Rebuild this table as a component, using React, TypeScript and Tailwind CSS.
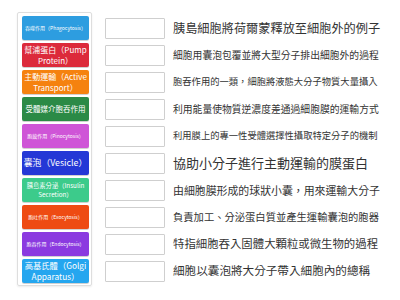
import React from "react";

const TILES = [
  { lines: ["吞噬作用（Phagocytosis）"], bg: "bg-[#2d9de0]", size: "text-[5px]" },
  { lines: ["幫浦蛋白（Pump", "Protein）"], bg: "bg-[#dc2a3b]", size: "text-[8px] leading-[11px]" },
  { lines: ["主動運輸（Active", "Transport）"], bg: "bg-[#f5820f]", size: "text-[8px] leading-[11px]" },
  { lines: ["受體媒介胞吞作用"], bg: "bg-[#2b8a46]", size: "text-[7.5px]" },
  { lines: ["胞飲作用（Pinocytosis）"], bg: "bg-[#cf55d7]", size: "text-[5px]" },
  { lines: ["囊泡（Vesicle）"], bg: "bg-[#2438d6]", size: "text-[8.8px]" },
  { lines: ["胰島素分泌（Insulin", "Secretion）"], bg: "bg-[#3ccb8b]", size: "text-[6.3px] leading-[9.5px]" },
  { lines: ["胞吐作用（Exocytosis）"], bg: "bg-[#ee4b13]", size: "text-[5px]" },
  { lines: ["胞吞作用（Endocytosis）"], bg: "bg-[#8b3ae0]", size: "text-[5px]" },
  { lines: ["高基氏體（Golgi", "Apparatus）"], bg: "bg-[#25a6ef]", size: "text-[8.3px] leading-[11px]" },
];

const DEFS = [
  { text: "胰島細胞將荷爾蒙釋放至細胞外的例子", size: "text-[12.2px]" },
  { text: "細胞用囊泡包覆並將大型分子排出細胞外的過程", size: "text-[9.8px]" },
  { text: "胞吞作用的一類，細胞將液態大分子物質大量攝入", size: "text-[9.3px]" },
  { text: "利用能量使物質逆濃度差通過細胞膜的運輸方式", size: "text-[9.8px]" },
  { text: "利用膜上的專一性受體選擇性攝取特定分子的機制", size: "text-[9.3px]" },
  { text: "協助小分子進行主動運輸的膜蛋白", size: "text-[13px]" },
  { text: "由細胞膜形成的球狀小囊，用來運輸大分子", size: "text-[10.9px]" },
  { text: "負責加工、分泌蛋白質並產生運輸囊泡的胞器", size: "text-[10.3px]" },
  { text: "特指細胞吞入固體大顆粒或微生物的過程", size: "text-[11.4px]" },
  { text: "細胞以囊泡將大分子帶入細胞內的總稱", size: "text-[11.6px]" },
];

export default function App() {
  return (
    <div
      className="w-[400px] h-[300px] bg-white flex items-start overflow-hidden"
      style={{ fontFamily: '"Noto Sans CJK TC", "Noto Sans", sans-serif' }}
    >
      {/* answer tiles */}
      <div className="ml-[17px] mt-[12px] w-[75px] border border-[#dedede] rounded-[2px] pl-[4px] pr-[2px] pt-[3px] pb-[2px] flex flex-col gap-[3px] shadow-[0_1px_2px_rgba(0,0,0,0.08)]">
        {TILES.map((t, i) => (
          <div
            key={i}
            className={`h-[24px] w-[67px] rounded-[2px] ${t.bg} text-white flex flex-col items-center justify-center text-center overflow-hidden shadow-[0_1px_0_rgba(0,0,0,0.18)]`}
          >
            {t.lines.map((l, j) => (
              <span key={j} className={`${t.size} whitespace-nowrap`}>
                {l}
              </span>
            ))}
          </div>
        ))}
      </div>

      {/* drop boxes + definitions */}
      <div className="mt-[16px] ml-[13px] flex flex-col gap-[3px]">
        {DEFS.map((d, i) => (
          <div key={i} className="h-[24px] flex items-center">
            <div className="w-[60px] h-[21px] border border-[#cfcfcf] rounded-[1px] bg-white shrink-0" />
            <span className={`ml-[8px] whitespace-nowrap text-[#333] ${d.size}`}>{d.text}</span>
          </div>
        ))}
      </div>
    </div>
  );
}
